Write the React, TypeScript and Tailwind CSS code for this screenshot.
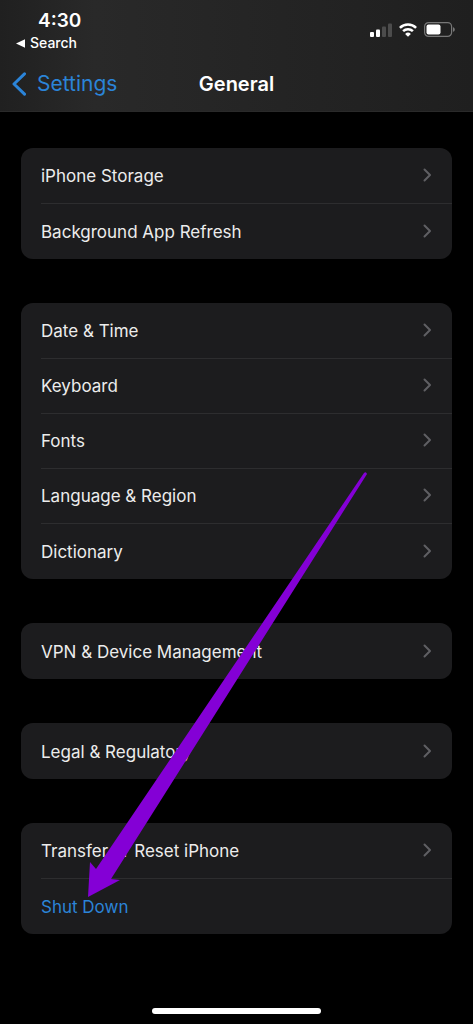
const GROUPS = [
  ["iPhone Storage", "Background App Refresh"],
  ["Date & Time", "Keyboard", "Fonts", "Language & Region", "Dictionary"],
  ["VPN & Device Management"],
  ["Legal & Regulatory"],
  ["Transfer or Reset iPhone", "Shut Down"],
];

function Chevron() {
  return (
    <svg width="9" height="14" viewBox="0 0 9 14" fill="none" className="shrink-0 text-[#5f5f63]" aria-hidden="true">
      <path d="M1.5 1.5 7 7l-5.5 5.5" stroke="currentColor" strokeWidth="2" strokeLinecap="round" strokeLinejoin="round" />
    </svg>
  );
}

function StatusIcons() {
  return (
    <div className="flex items-center gap-[7px]">
      <svg width="22" height="14" viewBox="0 0 22 14" aria-label="Signal" role="img">
        <rect x="0" y="9" width="4" height="5" rx="1" fill="#fff" />
        <rect x="6" y="6.5" width="4" height="7.5" rx="1" fill="#fff" />
        <rect x="12" y="3.5" width="4" height="10.5" rx="1" fill="#4c4c4c" />
        <rect x="18" y="0.5" width="4" height="13.5" rx="1" fill="#4c4c4c" />
      </svg>
      <svg width="18" height="14" viewBox="0 0 18 14" aria-label="Wi-Fi" role="img">
        <g fill="none" stroke="#fff" strokeWidth="2.5">
          <path d="M0.9 4.9a11.5 11.5 0 0 1 16.2 0" />
          <path d="M4.1 8.2a7 7 0 0 1 9.8 0" />
        </g>
        <path d="M9 13.8 6.1 10.9a4.1 4.1 0 0 1 5.8 0Z" fill="#fff" />
      </svg>
      <svg width="31" height="15" viewBox="0 0 31 15" aria-label="Battery" role="img">
        <rect x="0.6" y="0.6" width="27" height="13.8" rx="4" fill="none" stroke="#777" strokeWidth="1.2" />
        <rect x="2.5" y="2.5" width="14" height="10" rx="2" fill="#fff" />
        <path d="M29 5.2c1.1.4 1.8 1.2 1.8 2.3S30.1 9.4 29 9.8Z" fill="#777" />
      </svg>
    </div>
  );
}

function Header() {
  return (
    <header className="border-b border-[#2a2a2a] bg-linear-to-r from-[#202020] via-[#292929] via-20% to-[#1f1f1f]">
      <div className="flex h-14 items-start justify-between pr-[18px] pl-4">
        <div className="flex flex-col pt-2">
          <time className="pl-[22px] text-[19px] leading-[26px] font-semibold">4:30</time>
          <button type="button" className="flex items-center gap-[5px] text-sm leading-[18px] font-medium">
            <svg width="9" height="9" viewBox="0 0 9 9" fill="currentColor" aria-hidden="true">
              <path d="M0 4.5 9 0.3v8.4Z" />
            </svg>
            Search
          </button>
        </div>
        <div className="pt-[22px]">
          <StatusIcons />
        </div>
      </div>
      <div className="grid h-[55px] grid-cols-[1fr_auto_1fr] items-center px-3">
        <button type="button" className="flex items-center gap-[11px] text-[21px] text-[#2b84d8]">
          <svg width="14" height="24" viewBox="0 0 14 24" fill="none" aria-hidden="true">
            <path d="M12.5 1.8 2 12l10.5 10.2" stroke="currentColor" strokeWidth="3" strokeLinecap="round" strokeLinejoin="round" />
          </svg>
          Settings
        </button>
        <h1 className="text-xl font-semibold">General</h1>
      </div>
    </header>
  );
}

function Group({ items }: { items: string[] }) {
  return (
    <ul className="overflow-hidden rounded-xl bg-[#1c1c1e] pt-px pl-5">
      {items.map((label) => (
        <li key={label} className="h-[55px] not-last:border-b not-last:border-[#2d2d2f]">
          <button
            type="button"
            className={`flex size-full items-center justify-between pr-5 pb-0.5 text-left text-[17px] ${
              label === "Shut Down" ? "text-[#2b84d8]" : "text-[#ececec]"
            }`}
          >
            <span className="pt-1">{label}</span>
            {label !== "Shut Down" && <Chevron />}
          </button>
        </li>
      ))}
    </ul>
  );
}

export default function App() {
  return (
    <div className="relative flex min-h-screen flex-col bg-black font-[Inter,'Liberation_Sans',sans-serif] text-white">
      <Header />
      <main className="flex flex-1 flex-col gap-11 px-[21px] pt-9">
        {GROUPS.map((items) => (
          <Group key={items[0]} items={items} />
        ))}
      </main>
      <div className="flex justify-center pb-[10px]">
        <div className="h-[6px] w-[169px] rounded-full bg-white" />
      </div>

      {/* arrow pointing at Shut Down */}
      <svg
        className="pointer-events-none absolute top-[470px] left-[84px]"
        width="288"
        height="430"
        viewBox="84 470 288 430"
        aria-hidden="true"
      >
        <path d="M88 897 90 862 96 869 364 473Q366 471 367 474L111 879 120 880Z" fill="#8400d6" />
      </svg>
    </div>
  );
}
